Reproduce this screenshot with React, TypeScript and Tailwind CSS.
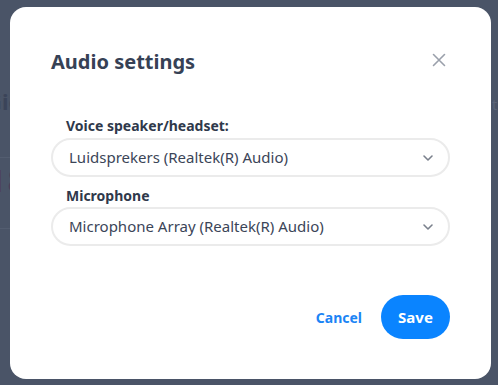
import React from "react";

function Chevron() {
  return (
    <svg width="16" height="16" viewBox="0 0 24 24" fill="none" stroke="#7a808c" strokeWidth="2.4" strokeLinecap="round" strokeLinejoin="round">
      <path d="M6 9l6 6 6-6" />
    </svg>
  );
}

function Select({ value }: { value: string }) {
  return (
    <div className="flex h-[39px] items-center justify-between rounded-full border-2 border-[#ebebeb] bg-white pl-[16px] pr-[12px]">
      <span className="text-[15px] text-[#3b4558]">{value}</span>
      <Chevron />
    </div>
  );
}

export default function App() {
  return (
    <div
      className="relative h-[385px] w-[498px] overflow-hidden bg-[#4a5467]"
      style={{ fontFamily: '"Noto Sans", "Open Sans", sans-serif' }}
    >
      {/* background page, dimmed */}
      <div className="absolute left-[-14px] top-[90px] text-[22px] font-bold leading-none text-[#3b4459]">Gie</div>
      <div className="absolute left-0 top-[157px] h-px w-[10px] bg-[#535d70]" />
      <div className="absolute left-[-10px] top-[166px] text-[30px] leading-none text-[#4d3f5a]">18</div>
      <div className="absolute left-[12px] top-[204px] text-[13px] leading-none text-[#5b6477]">T</div>
      <div className="absolute left-0 top-[228px] h-px w-[10px] bg-[#535d70]" />
      <div className="absolute left-[492px] top-[98px] text-[14px] leading-none text-[#5b6477]">t</div>

      {/* modal */}
      <div className="absolute left-[10px] top-[7px] flex h-[372px] w-[481px] flex-col rounded-[16px] bg-white px-[41px] pt-[41px]">
        <div className="flex items-center justify-between">
          <h2 className="text-[20px] font-bold leading-[28px] text-[#364155]">Audio settings</h2>
          <button className="mr-[-1px] mt-[-4px] flex h-[24px] w-[24px] items-center justify-center">
            <svg width="14" height="14" viewBox="0 0 14 14" fill="none" stroke="#9aa0ab" strokeWidth="1.6" strokeLinecap="round">
              <path d="M1.5 1.5l11 11M12.5 1.5l-11 11" />
            </svg>
          </button>
        </div>

        <div className="mt-[40px] flex flex-col">
          <label className="pl-[15px] text-[14px] font-bold leading-[20px] text-[#2f394b]">Voice speaker/headset:</label>
          <div className="mt-[2px]">
            <Select value="Luidsprekers (Realtek(R) Audio)" />
          </div>
          <label className="mt-[9px] pl-[15px] text-[14px] font-bold leading-[20px] text-[#2f394b]">Microphone</label>
          <div className="mt-[1px]">
            <Select value="Microphone Array (Realtek(R) Audio)" />
          </div>
        </div>

        <div className="mt-[49px] flex items-center justify-end gap-[19px]">
          <button className="text-[14px] font-bold text-[#1b84f5]">Cancel</button>
          <button className="h-[44px] w-[69px] rounded-full bg-[#0a84ff] text-[15px] font-bold text-white">Save</button>
        </div>
      </div>
    </div>
  );
}
